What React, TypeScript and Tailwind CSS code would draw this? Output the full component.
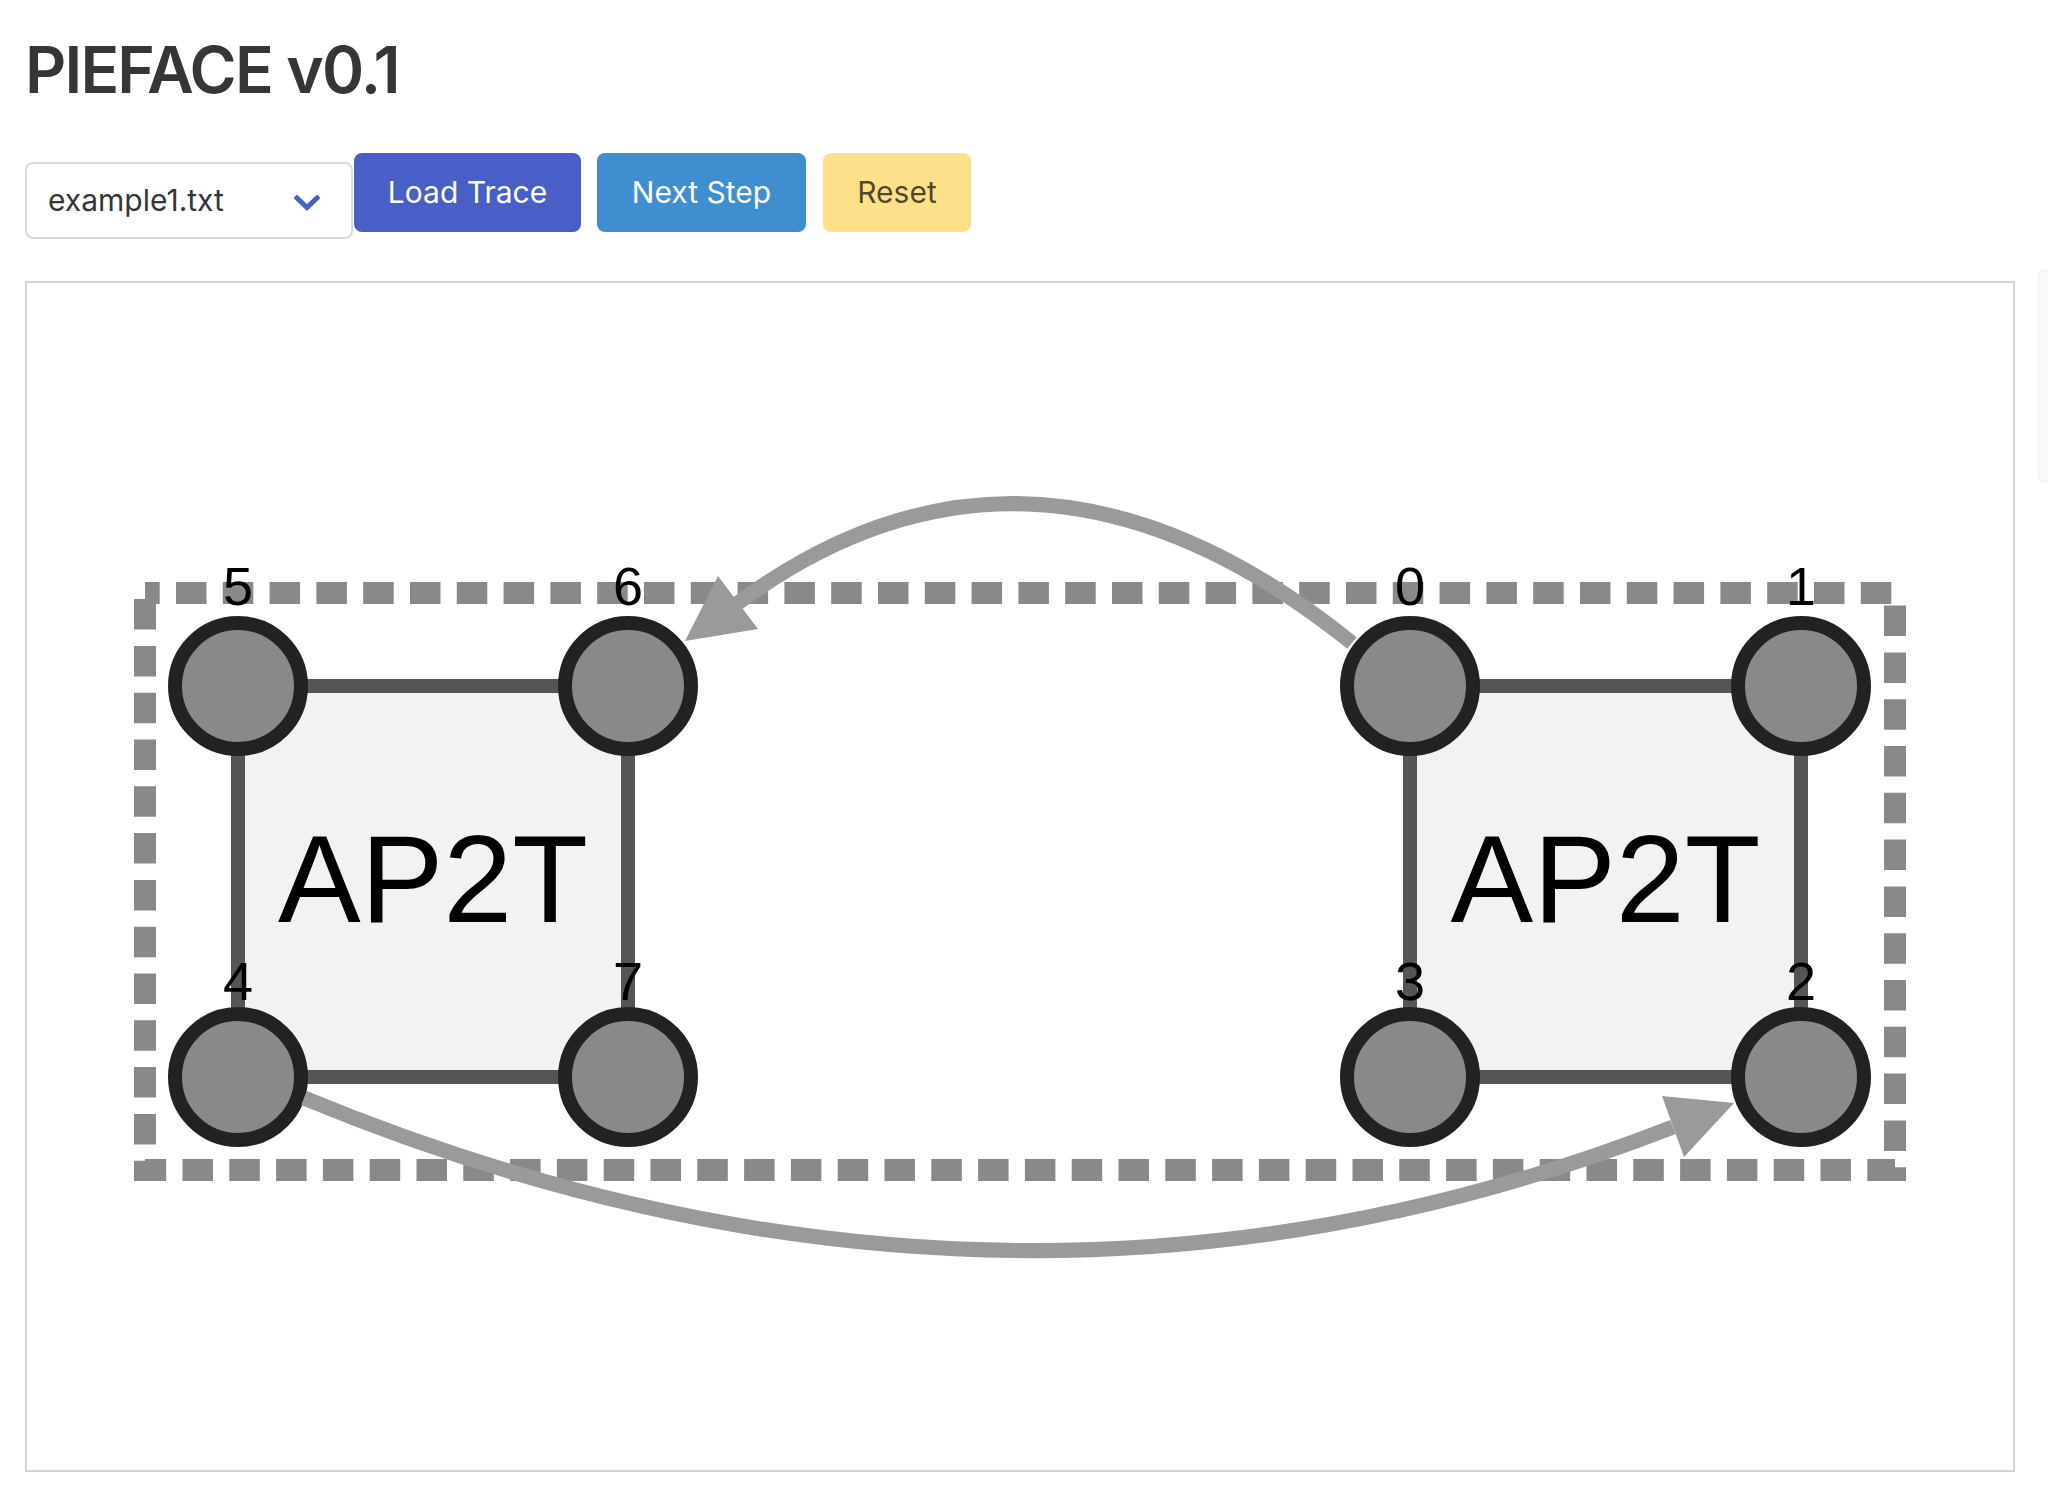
type Node = { id: number; x: number; y: number };

// page coordinates, the svg viewBox is offset so these line up with the screen
const TOP = 686;
const BOTTOM = 1077;

const BLOCKS: { label: string; nodes: Node[] }[] = [
  {
    label: "AP2T",
    nodes: [
      { id: 5, x: 238, y: TOP },
      { id: 6, x: 628, y: TOP },
      { id: 7, x: 628, y: BOTTOM },
      { id: 4, x: 238, y: BOTTOM },
    ],
  },
  {
    label: "AP2T",
    nodes: [
      { id: 0, x: 1410, y: TOP },
      { id: 1, x: 1801, y: TOP },
      { id: 2, x: 1801, y: BOTTOM },
      { id: 3, x: 1410, y: BOTTOM },
    ],
  },
];

const ARROWS = [
  { d: "M1352 643 Q1032 386 738 603", head: "685,641 718,576 758,629" },
  { d: "M304 1098 Q1005 1388 1673 1127", head: "1734,1103 1662,1096 1684,1157" },
];

function Block({ label, nodes }: { label: string; nodes: Node[] }) {
  const [a, b, , d] = nodes;
  return (
    <g>
      <rect
        x={a.x}
        y={a.y}
        width={b.x - a.x}
        height={d.y - a.y}
        fill="#f2f2f2"
        stroke="#555555"
        strokeWidth={14}
      />
      {nodes.map((n) => (
        <circle key={n.id} cx={n.x} cy={n.y} r={63} fill="#898989" stroke="#222222" strokeWidth={14} />
      ))}
      {nodes.map((n) => (
        <text
          key={`l-${n.id}`}
          x={n.x}
          y={n.y === TOP ? 605 : 1000}
          textAnchor="middle"
          fontSize={54}
          fill="#000"
        >
          {n.id}
        </text>
      ))}
      <text x={(a.x + b.x) / 2} y={922} textAnchor="middle" fontSize={124} fill="#000">
        {label}
      </text>
    </g>
  );
}

function TraceCanvas() {
  return (
    <div className="mt-[42px] h-[1191px] w-[1990px] border-2 border-[#d4d4d4] bg-white">
      <svg
        width={1986}
        height={1187}
        viewBox="27 283 1986 1187"
        style={{ fontFamily: '"Liberation Sans", Arial, sans-serif' }}
      >
        <rect
          x={145}
          y={593}
          width={1750}
          height={577}
          fill="none"
          stroke="#898989"
          strokeWidth={22}
          strokeDasharray="30.5 16.3"
          strokeDashoffset={15.8}
        />
        {BLOCKS.map((blk, i) => (
          <Block key={i} label={blk.label} nodes={blk.nodes} />
        ))}
        {ARROWS.map((ar, i) => (
          <g key={i}>
            <path d={ar.d} fill="none" stroke="#9a9a9a" strokeWidth={15} />
            <polygon points={ar.head} fill="#9a9a9a" />
          </g>
        ))}
      </svg>
    </div>
  );
}

export default function App() {
  return (
    <div
      className="relative min-h-screen bg-white pl-[25px] pt-[34px] text-[#363636]"
      style={{ fontFamily: 'Inter, "Liberation Sans", sans-serif' }}
    >
      <h1 className="text-[64px] font-semibold leading-[72px] tracking-[-1.8px]">PIEFACE v0.1</h1>

      <div className="mt-[47px] flex items-start">
        <div className="mt-[9px] flex h-[77px] w-[328px] items-center justify-between rounded-[8px] border-2 border-[#dbdbdb] bg-white pl-[21px] pr-[31px] text-[30px]">
          <span>example1.txt</span>
          <svg width={26} height={16} viewBox="0 0 26 16" className="mt-[4px]">
            <polyline
              points="3,3 13,12.5 23,3"
              fill="none"
              stroke="#485fc7"
              strokeWidth={5}
              strokeLinecap="square"
            />
          </svg>
        </div>
        <button className="ml-[1px] flex h-[79px] w-[227px] items-center justify-center rounded-[8px] bg-[#485fc7] text-[30px] text-white">
          Load Trace
        </button>
        <button className="ml-[16px] flex h-[79px] w-[209px] items-center justify-center rounded-[8px] bg-[#3e8ed0] text-[30px] text-white">
          Next Step
        </button>
        <button className="ml-[17px] flex h-[79px] w-[148px] items-center justify-center rounded-[8px] bg-[#ffe08a] text-[30px] text-[rgba(0,0,0,0.7)]">
          Reset
        </button>
      </div>

      <TraceCanvas />

      {/* overlay scrollbar sliver at the window edge */}
      <div className="absolute right-0 top-[270px] h-[212px] w-[10px] rounded-l-[6px] border border-r-0 border-[#ececec] bg-[#fafafa]" />
    </div>
  );
}
